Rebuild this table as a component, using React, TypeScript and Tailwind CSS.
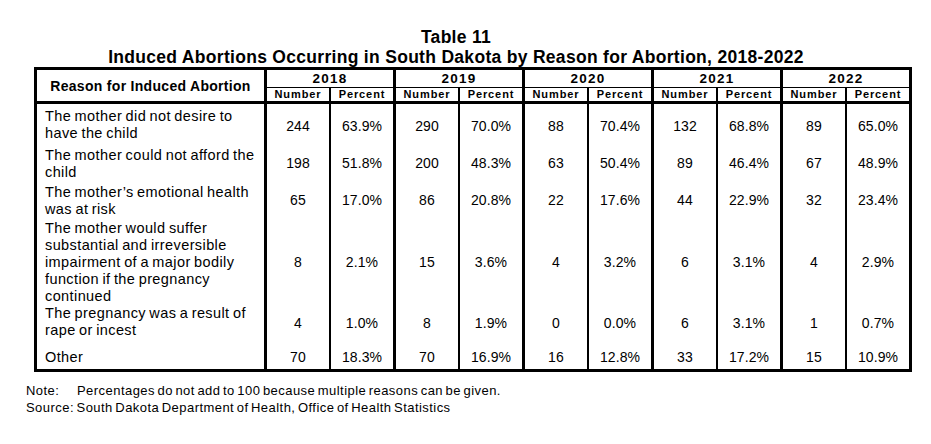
import React from "react";

type Row = {
  lines: string[];
  h: string;
  pt: string;
  pn: string;
  vals: string[];
};

const rows: Row[] = [
  {
    lines: ["The mother did not desire to", "have the child"],
    h: "h-[41px]",
    pt: "pt-[4px]",
    pn: "pt-[14px]",
    vals: ["244", "63.9%", "290", "70.0%", "88", "70.4%", "132", "68.8%", "89", "65.0%"],
  },
  {
    lines: ["The mother could not afford the", "child"],
    h: "h-[37px]",
    pt: "pt-[2px]",
    pn: "pt-[10px]",
    vals: ["198", "51.8%", "200", "48.3%", "63", "50.4%", "89", "46.4%", "67", "48.9%"],
  },
  {
    lines: ["The mother\u2019s emotional health", "was at risk"],
    h: "h-[37px]",
    pt: "pt-[2px]",
    pn: "pt-[10px]",
    vals: ["65", "17.0%", "86", "20.8%", "22", "17.6%", "44", "22.9%", "32", "23.4%"],
  },
  {
    lines: [
      "The mother would suffer",
      "substantial and irreversible",
      "impairment of a major bodily",
      "function if the pregnancy",
      "continued",
    ],
    h: "h-[85px]",
    pt: "pt-[1px]",
    pn: "pt-[35px]",
    vals: ["8", "2.1%", "15", "3.6%", "4", "3.2%", "6", "3.1%", "4", "2.9%"],
  },
  {
    lines: ["The pregnancy was a result of", "rape or incest"],
    h: "h-[39px]",
    pt: "pt-[1px]",
    pn: "pt-[11px]",
    vals: ["4", "1.0%", "8", "1.9%", "0", "0.0%", "6", "3.1%", "1", "0.7%"],
  },
  {
    lines: ["Other"],
    h: "h-[26px]",
    pt: "pt-[6px]",
    pn: "pt-[6px]",
    vals: ["70", "18.3%", "70", "16.9%", "16", "12.8%", "33", "17.2%", "15", "10.9%"],
  },
];

const years = ["2018", "2019", "2020", "2021", "2022"];

const valBorder = [
  "border-r-2",
  "border-r-[3px]",
  "border-r-2",
  "border-r-[3px]",
  "border-r-2",
  "border-r-[3px]",
  "border-r-2",
  "border-r-[3px]",
  "border-r-2",
  "",
];

export default function App() {
  return (
    <div className="w-[931px] h-[444px] bg-white text-black font-['Liberation_Sans',Arial,sans-serif] overflow-hidden">
      <div className="w-[912px] pt-[27px] text-center font-bold text-[17.5px] leading-[20px] tracking-[0.3px]">
        <div>Table 11</div>
        <div>Induced Abortions Occurring in South Dakota by Reason for Abortion, 2018-2022</div>
      </div>

      <div className="ml-[34px] w-[878px] border-[3px] border-black grid grid-cols-[230px_64px_65px_64px_65px_64px_65px_64px_65px_64px_62px]">
        {/* header */}
        <div className="row-span-2 border-r-[3px] border-b-[3px] border-black flex items-center justify-center font-bold text-[14px] tracking-[0.3px] pt-[1px]">
          Reason for Induced Abortion
        </div>
        {years.map((y, i) => (
          <div
            key={y}
            className={`col-span-2 h-[18px] border-b border-black text-center font-bold text-[13.5px] leading-[17px] tracking-[1.3px] ${
              i < 4 ? "border-r-[3px]" : ""
            }`}
          >
            {y}
          </div>
        ))}
        {years.map((y, i) => (
          <React.Fragment key={"s" + y}>
            <div className="h-[16px] border-b-[3px] border-r-2 border-black text-center font-bold text-[11px] leading-[13px] tracking-[0.9px]">
              Number
            </div>
            <div
              className={`h-[16px] border-b-[3px] border-black text-center font-bold text-[11px] leading-[13px] tracking-[0.9px] ${
                i < 4 ? "border-r-[3px]" : ""
              }`}
            >
              Percent
            </div>
          </React.Fragment>
        ))}

        {/* body */}
        {rows.map((r, ri) => (
          <React.Fragment key={ri}>
            <div
              className={`${r.h} ${r.pt} pl-[8px] border-r-[3px] border-black text-[14.5px] leading-[17px] tracking-[0.4px] [word-spacing:-1px]`}
            >
              {r.lines.map((l, li) => (
                <div key={li} className="whitespace-nowrap">
                  {l}
                </div>
              ))}
            </div>
            {r.vals.map((v, vi) => (
              <div
                key={vi}
                className={`${r.h} ${r.pn} ${valBorder[vi]} border-black text-center text-[14px] leading-[17px] tracking-[0.1px]`}
              >
                {v}
              </div>
            ))}
          </React.Fragment>
        ))}
      </div>

      <div className="pl-[26px] mt-[10px] text-[13px] leading-[17px] tracking-[0.45px] [word-spacing:-1.5px]">
        <div className="flex">
          <span className="w-[51px] shrink-0">Note:</span>
          <span>Percentages do not add to 100 because multiple reasons can be given.</span>
        </div>
        <div>Source: South Dakota Department of Health, Office of Health Statistics</div>
      </div>
    </div>
  );
}
